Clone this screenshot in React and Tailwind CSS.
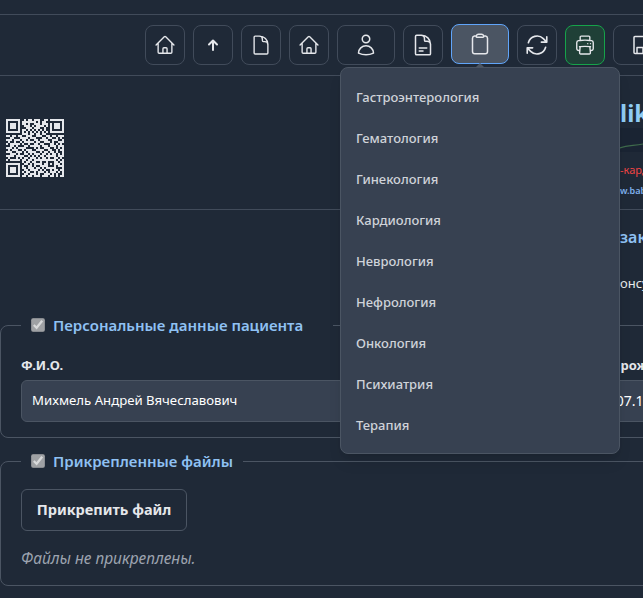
import {
  HiOutlineHome,
  HiOutlineDocument,
  HiOutlineUser,
  HiOutlineDocumentText,
  HiOutlineClipboard,
  HiOutlineArrowPath,
  HiOutlinePrinter,
} from 'react-icons/hi2';

const departments = [
  'Гастроэнтерология',
  'Гематология',
  'Гинекология',
  'Кардиология',
  'Неврология',
  'Нефрология',
  'Онкология',
  'Психиатрия',
  'Терапия',
];

const qrRows = [
  '11111110010110111001101111111',
  '10000010111111101011000000001',
  '10111010110100111011101011101',
  '10111010011101011110101011101',
  '10111010001110111001001011101',
  '10000010110101010101001000001',
  '11111110101010101010101111111',
  '00000000111011011011000000000',
  '11011011001110011100110110111',
  '00110001111011100011011001010',
  '11101110110100110111100111001',
  '01001001011111011001110100111',
  '10111110100100110110001101010',
  '00110100011011111011101110111',
  '11101011110000101001110010101',
  '01011100101110011110011001011',
  '11100111010111100101101101001',
  '00111010011010111011010110101',
  '11110111100101010110111110111',
  '01000101011011101011010011010',
  '10111110110110111111111110101',
  '00000000101101100100100011011',
  '11111110011010111101101011101',
  '10000010100110100111100010111',
  '10111010110111011010111110001',
  '10111010011011110101001011011',
  '10111010101100101110101110101',
  '10000010011011101001110101001',
  '11111110110110111011101101011',
];

function QrCode() {
  return (
    <svg width="58" height="58" viewBox="0 0 29 29" shapeRendering="crispEdges" className="block">
      {qrRows.map((row, y) =>
        row.split('').map((cell, x) =>
          cell === '1' ? <rect key={`${x}-${y}`} x={x} y={y} width="1" height="1" fill="#e5e7eb" /> : null
        )
      )}
    </svg>
  );
}

function ToolButton({ children, className = 'w-10' }) {
  return (
    <button className={`${className} h-10 shrink-0 flex items-center justify-center rounded-lg border border-[#414b5a] text-[#e5e7eb]`}>
      {children}
    </button>
  );
}

function Legend({ children, className = 'pr-[10px]' }) {
  return (
    <legend className={`${className} pl-[10px] flex items-center gap-2 text-[15px] font-semibold text-[#8fc1f3]`}>
      <input type="checkbox" checked disabled readOnly className="w-[14px] h-[14px] m-0" />
      {children}
    </legend>
  );
}

export default function App() {
  return (
    <div className="w-full h-[598px] overflow-hidden bg-[#1f2937]" style={{ fontFamily: '"Noto Sans", "Open Sans", sans-serif' }}>
      <div className="w-[780px]">
        <div className="h-[14px]" />

        <div className="border-y border-[#414b5a] h-[62px] pl-[145px] flex items-center gap-2">
          <ToolButton><HiOutlineHome size={22} /></ToolButton>
          <ToolButton>
            <svg width="14" height="14" viewBox="0 0 14 14" fill="none" stroke="currentColor" strokeWidth="2" strokeLinecap="round" strokeLinejoin="round">
              <path d="M7 12V3M3 6.5 7 2.5l4 4" />
            </svg>
          </ToolButton>
          <ToolButton><HiOutlineDocument size={22} /></ToolButton>
          <ToolButton><HiOutlineHome size={22} /></ToolButton>
          <ToolButton className="w-[58px]"><HiOutlineUser size={24} /></ToolButton>
          <ToolButton><HiOutlineDocumentText size={24} /></ToolButton>

          <div className="relative">
            <button className="w-[58px] h-10 -translate-y-px flex items-center justify-center rounded-lg border border-[#60a5fa] bg-[#4b5563] text-[#e5e7eb]">
              <HiOutlineClipboard size={24} />
            </button>
            <div className="absolute z-10 left-[24px] top-[38px] w-0 h-0 border-x-[5px] border-x-transparent border-b-[5px] border-b-[#4b5563]" />
            <div className="absolute z-10 left-[-111px] top-[42px] w-[280px] pt-[9px] pb-[7px] rounded-lg border border-[#4b5563] bg-[#374151] shadow-lg">
              {departments.map((name) => (
                <div key={name} className="h-[41px] px-[15px] flex items-center text-[13px] font-medium text-[#cfd3d9]">
                  {name}
                </div>
              ))}
            </div>
          </div>

          <ToolButton><HiOutlineArrowPath size={26} /></ToolButton>
          <button className="w-10 h-10 shrink-0 flex items-center justify-center rounded-lg border border-[#16a34a] bg-[#1f4037] text-[#e5e7eb]">
            <HiOutlinePrinter size={22} />
          </button>
          <ToolButton className="w-[58px]">
            <svg width="18" height="20" viewBox="0 0 18 20" fill="none" stroke="currentColor" strokeWidth="1.5" strokeLinejoin="round">
              <path d="M2 1.5h14a1 1 0 0 1 1 1v15a1 1 0 0 1-1 1H2a1 1 0 0 1-1-1v-15a1 1 0 0 1 1-1Z" />
              <path d="M4 18.5v-6h6v6" />
            </svg>
          </ToolButton>
        </div>

        <div className="h-[134px] border-b border-[#414b5a] flex">
          <div className="pl-[6px] pt-[43px] w-[620px]">
            <QrCode />
          </div>
          <div className="pt-[24px] w-[120px]">
            <div className="text-[24px] leading-[26px] font-bold text-[#90cdf4]">lik</div>
            <svg width="120" height="24" viewBox="0 0 120 24" className="block mt-[2px] bg-[#1a2433]">
              <path d="M0 20 C8 17 14 18 23 16 C40 14 60 10 120 8" fill="none" stroke="#3f6b4c" strokeWidth="1.2" />
            </svg>
            <div className="mt-[9px] text-[11px] leading-[18px] text-[#ef4444]">-кард</div>
            <div className="mt-[5px] text-[9px] leading-[14px] font-semibold text-[#7fb2ef]">w.bab</div>
          </div>
        </div>

        <div className="h-[104px] pl-[620px] pt-[16px]">
          <div className="text-[16px] leading-[22px] font-semibold text-[#8fc1f3]">зак</div>
          <div className="mt-[25px] text-[13px] leading-[20px] text-[#e5e7eb]">онсу</div>
        </div>

        <fieldset className="border border-[#4b5563] rounded-lg px-5 pt-[20px] h-[124px]">
          <Legend className="pr-[30px]">Персональные данные пациента</Legend>
          <div className="grid grid-cols-[554px_1fr] gap-[10px] -mt-[1px]">
            <div>
              <label className="block mb-[6px] text-[13px] leading-[18px] font-bold text-[#e5e7eb]">Ф.И.О.</label>
              <div className="h-[42px] px-[10px] flex items-center rounded-md border border-[#4b5563] bg-[#374151] text-[13.2px] text-white">
                Михмель Андрей Вячеславович
              </div>
            </div>
            <div>
              <label className="block mb-[6px] text-[13px] leading-[18px] font-bold text-[#e5e7eb]">Дата рождения</label>
              <div className="h-[42px] px-[10px] flex items-center rounded-md border border-[#4b5563] bg-[#374151] text-[14px] text-white">
                18.07.1975
              </div>
            </div>
          </div>
        </fieldset>

        <fieldset className="mt-[12px] border border-[#4b5563] rounded-lg px-5 pt-[16px] h-[136px]">
          <Legend>Прикрепленные файлы</Legend>
          <button className="h-[42px] w-[166px] rounded-md border border-[#4b5563] text-[14.5px] font-bold text-[#e5e7eb]">
            Прикрепить файл
          </button>
          <p className="mt-[17px] text-[15.5px] leading-[20px] italic text-[#9ca3af]">Файлы не прикреплены.</p>
        </fieldset>
      </div>
    </div>
  );
}
